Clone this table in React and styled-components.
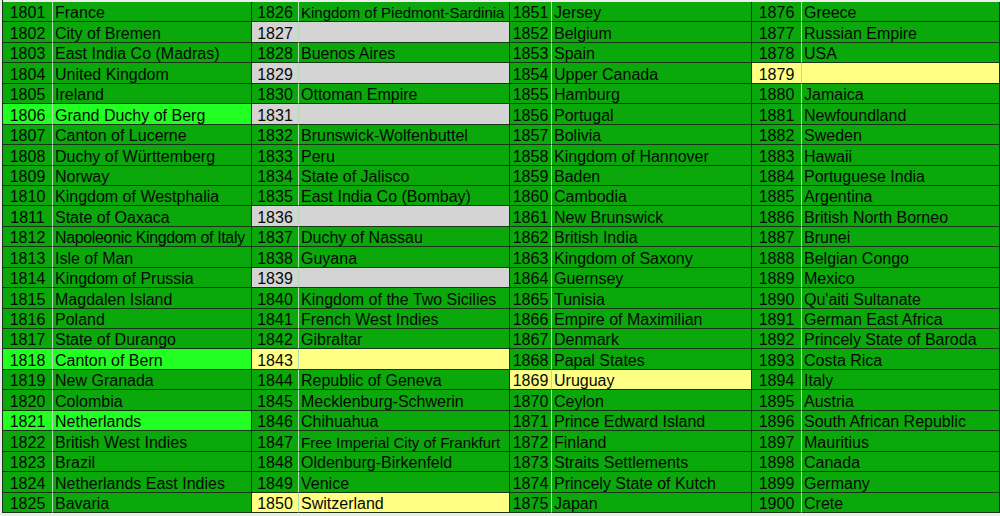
import React from "react";
import styled, { createGlobalStyle } from "styled-components";

const Global = createGlobalStyle`
  html, body { margin: 0; padding: 0; }
  body {
    background: #ececec;
    font-family: "Liberation Sans", Arial, sans-serif;
    overflow: hidden;
  }
`;

const FILL = {
  green: "#0aa80a",
  bright: "#22ff22",
  gray: "#d4d4d4",
  yellow: "#ffff84",
};

const Sheet = styled.div`
  display: flex;
  margin-left: 2px;
  padding-top: 2px;
  border-left: 1px solid #163616;
  width: max-content;
`;

const Group = styled.div`
  display: grid;
  grid-template-columns: ${(p) => p.$year}px ${(p) => p.$name}px;
  grid-template-rows: repeat(25, 1fr);
  height: 511px;
`;

const Cell = styled.div`
  box-sizing: border-box;
  display: flex;
  align-items: flex-end;
  overflow: hidden;
  white-space: nowrap;
  background: ${(p) => FILL[p.$fill]};
  border-bottom: 1px solid #163616;
  color: #050a05;
  font-size: 16px;
  line-height: 16px;
`;

const Year = styled(Cell)`
  justify-content: center;
  border-right: 1px solid #b4dcb4;
`;

const Name = styled(Cell)`
  padding-left: 2px;
  border-right: 1px solid #163616;
  font-size: ${(p) => p.$size || 16}px;
  letter-spacing: ${(p) => p.$spacing || 0}px;
`;

const groups = [
  {
    year: 50,
    name: 199,
    rows: [
      ["1801", "France"],
      ["1802", "City of Bremen"],
      ["1803", "East India Co (Madras)"],
      ["1804", "United Kingdom"],
      ["1805", "Ireland"],
      ["1806", "Grand Duchy of Berg", "bright"],
      ["1807", "Canton of Lucerne"],
      ["1808", "Duchy of Württemberg"],
      ["1809", "Norway"],
      ["1810", "Kingdom of Westphalia"],
      ["1811", "State of Oaxaca"],
      ["1812", "Napoleonic Kingdom of Italy", "green", 16, -0.35],
      ["1813", "Isle of Man"],
      ["1814", "Kingdom of Prussia"],
      ["1815", "Magdalen Island"],
      ["1816", "Poland"],
      ["1817", "State of Durango"],
      ["1818", "Canton of Bern", "bright"],
      ["1819", "New Granada"],
      ["1820", "Colombia"],
      ["1821", "Netherlands", "bright"],
      ["1822", "British West Indies"],
      ["1823", "Brazil"],
      ["1824", "Netherlands East Indies"],
      ["1825", "Bavaria"],
    ],
  },
  {
    year: 47,
    name: 211,
    rows: [
      ["1826", "Kingdom of Piedmont-Sardinia", "green", 15],
      ["1827", "", "gray"],
      ["1828", "Buenos Aires"],
      ["1829", "", "gray"],
      ["1830", "Ottoman Empire"],
      ["1831", "", "gray"],
      ["1832", "Brunswick-Wolfenbuttel"],
      ["1833", "Peru"],
      ["1834", "State of Jalisco"],
      ["1835", "East India Co (Bombay)"],
      ["1836", "", "gray"],
      ["1837", "Duchy of Nassau"],
      ["1838", "Guyana"],
      ["1839", "", "gray"],
      ["1840", "Kingdom of the Two Sicilies"],
      ["1841", "French West Indies"],
      ["1842", "Gibraltar"],
      ["1843", "", "yellow"],
      ["1844", "Republic of Geneva"],
      ["1845", "Mecklenburg-Schwerin"],
      ["1846", "Chihuahua"],
      ["1847", "Free Imperial City of Frankfurt", "green", 15],
      ["1848", "Oldenburg-Birkenfeld"],
      ["1849", "Venice"],
      ["1850", "Switzerland", "yellow"],
    ],
  },
  {
    year: 42,
    name: 200,
    rows: [
      ["1851", "Jersey"],
      ["1852", "Belgium"],
      ["1853", "Spain"],
      ["1854", "Upper Canada"],
      ["1855", "Hamburg"],
      ["1856", "Portugal"],
      ["1857", "Bolivia"],
      ["1858", "Kingdom of Hannover"],
      ["1859", "Baden"],
      ["1860", "Cambodia"],
      ["1861", "New Brunswick"],
      ["1862", "British India"],
      ["1863", "Kingdom of Saxony"],
      ["1864", "Guernsey"],
      ["1865", "Tunisia"],
      ["1866", "Empire of Maximilian"],
      ["1867", "Denmark"],
      ["1868", "Papal States"],
      ["1869", "Uruguay", "yellow"],
      ["1870", "Ceylon"],
      ["1871", "Prince Edward Island"],
      ["1872", "Finland"],
      ["1873", "Straits Settlements"],
      ["1874", "Princely State of Kutch"],
      ["1875", "Japan"],
    ],
  },
  {
    year: 50,
    name: 198,
    rows: [
      ["1876", "Greece"],
      ["1877", "Russian Empire"],
      ["1878", "USA"],
      ["1879", "", "yellow"],
      ["1880", "Jamaica"],
      ["1881", "Newfoundland"],
      ["1882", "Sweden"],
      ["1883", "Hawaii"],
      ["1884", "Portuguese India"],
      ["1885", "Argentina"],
      ["1886", "British North Borneo"],
      ["1887", "Brunei"],
      ["1888", "Belgian Congo"],
      ["1889", "Mexico"],
      ["1890", "Qu'aiti Sultanate"],
      ["1891", "German East Africa"],
      ["1892", "Princely State of Baroda"],
      ["1893", "Costa Rica"],
      ["1894", "Italy"],
      ["1895", "Austria"],
      ["1896", "South African Republic"],
      ["1897", "Mauritius"],
      ["1898", "Canada"],
      ["1899", "Germany"],
      ["1900", "Crete"],
    ],
  },
];

export default function App() {
  return (
    <>
      <Global />
      <Sheet>
        {groups.map((g, gi) => (
          <Group key={gi} $year={g.year} $name={g.name}>
            {g.rows.map(([y, n, fill = "green", size, spacing]) => (
              <React.Fragment key={y}>
                <Year $fill={fill}>{y}</Year>
                <Name $fill={fill} $size={size} $spacing={spacing}>
                  {n}
                </Name>
              </React.Fragment>
            ))}
          </Group>
        ))}
      </Sheet>
    </>
  );
}
